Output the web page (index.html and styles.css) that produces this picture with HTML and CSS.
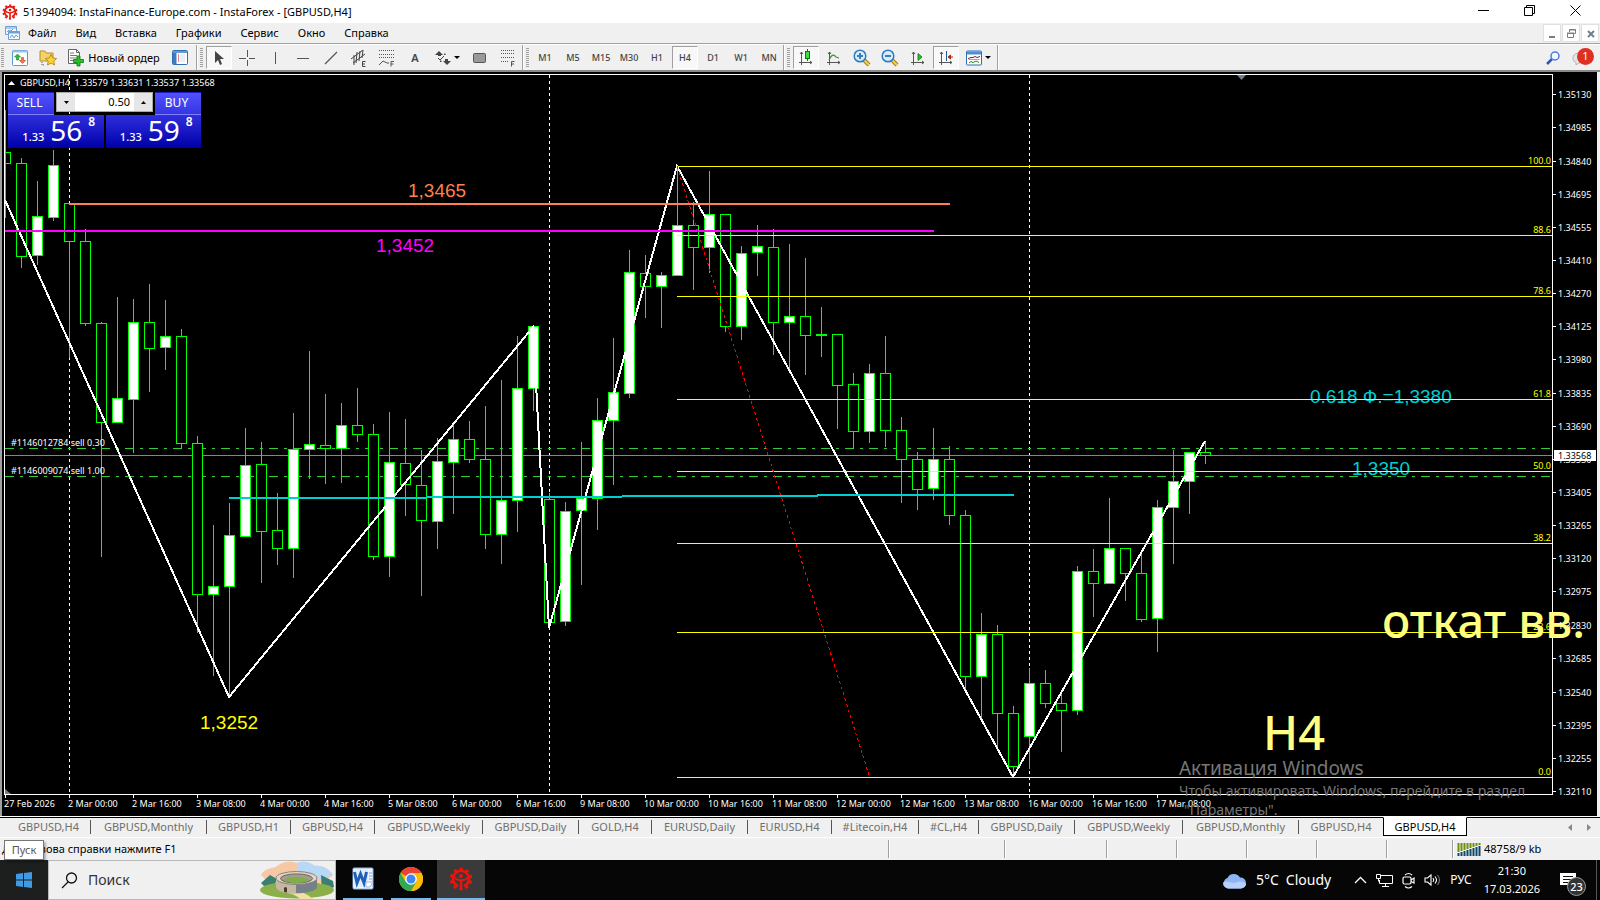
FILE: index.html
```html
<!DOCTYPE html>
<html lang="ru">
<head>
<meta charset="utf-8">
<title>51394094: InstaFinance-Europe.com - InstaForex - [GBPUSD,H4]</title>
<link rel="stylesheet" href="styles.css">
</head>
<body>
<svg class="defs" width="0" height="0" aria-hidden="true">
  <symbol id="insta" viewBox="0 0 24 24">
    <g fill="none" stroke="currentColor">
      <path d="M9 19.200A8 8 0 1 1 15 19.200" stroke-width="2.600"/>
      <circle cx="12" cy="12" r="10" stroke-width="2.600" stroke-dasharray="3.200 3.083" stroke-dashoffset="-1.500"/>
      <path d="M12 13v10" stroke-width="2.400"/>
      <path d="M5 10c2 3 4 3 7 3.500 3-.5 5-.5 7-3.500" stroke-width="2"/>
    </g>
    <circle cx="12" cy="9" r="2" fill="currentColor"/>
  </symbol>
</svg>

<header class="titlebar">
  <svg class="ico16 red" viewBox="0 0 24 24"><use href="#insta"/></svg>
  <h1 class="title">51394094: InstaFinance-Europe.com - InstaForex - [GBPUSD,H4]</h1>
  <div class="winbtns">
    <button aria-label="Свернуть"><svg width="11" height="11"><path d="M0 5.500h11" stroke="#000"/></svg></button>
    <button aria-label="Восстановить"><svg width="11" height="11" fill="none" stroke="#000"><path d="M.5 2.500h8v8h-8zM2.500 2.500v-2h8v8h-2"/></svg></button>
    <button aria-label="Закрыть"><svg width="11" height="11"><path d="M.5.5l10 10M10.500.5l-10 10" stroke="#000"/></svg></button>
  </div>
</header>

<nav class="menubar">
  <svg class="ico16" viewBox="0 0 16 16" fill="#f4f8ff" stroke="#6f9fd8"><path d="M1.500 1.500h11v8h-11z"/><path d="M1.500 3h11M3 7l2-2 2 1 2-2" /><path d="M4.500 6.500h11v8h-11z"/><path d="M4.500 7.500h11" stroke-width="2"/><path d="M6 13l2-3 2 3 2-3 2 2" fill="none"/></svg>
  <button>Файл</button><button>Вид</button><button>Вставка</button><button>Графики</button><button>Сервис</button><button>Окно</button><button>Справка</button>
  <div class="mdi">
    <button aria-label="Свернуть окно"><svg width="15" height="15"><path d="M4 11h6" stroke="#708090" stroke-width="2"/></svg></button>
    <button aria-label="Восстановить окно"><svg width="15" height="15" fill="none" stroke="#708090"><path d="M3.500 7.500h6v4h-6zM3 7h7M5.500 6v-2.500h6v4h-2M5 4h7"/></svg></button>
    <button aria-label="Закрыть окно"><svg width="15" height="15"><path d="M5 5l6 6M11 5l-6 6" stroke="#708090" stroke-width="2"/></svg></button>
  </div>
</nav>

<div class="toolbar">
  <div class="group first">
    <i class="grip"></i>
    <button class="tb" aria-label="Новый график"><svg width="16" height="16"><rect x=".5" y=".5" width="15" height="15" rx="1" fill="#fff" stroke="#5a98d4"/><path d="M1 1.500h14" stroke="#9cc4ea" stroke-width="2"/><path d="M5.500 4l3 3h-2v3h-2V7h-2z" fill="#3dbb3d" stroke="#137d13" stroke-width=".6"/><path d="M10.500 13.500l3-3h-2v-3h-2v3h-2z" fill="#f47a4a" stroke="#c03a10" stroke-width=".6"/></svg></button>
    <button class="tb" aria-label="Профили"><svg width="18" height="17"><path d="M1 2h5l1 2h7v8H1z" fill="#f2d36a" stroke="#b98e2b"/><path d="M3 13v3h3" fill="none" stroke="#555" stroke-dasharray="1 1"/><path d="M12 5.500l1.800 3.500 3.900.5-2.900 2.600.8 3.900-3.600-1.900-3.500 1.900.7-3.900-2.800-2.600 3.900-.5z" fill="#fbd23c" stroke="#b07c14" stroke-width=".8"/></svg></button>
    <button class="tb wide"><svg width="16" height="18"><path d="M.5.5h8l3 3v11H.5z" fill="#fff" stroke="#666"/><path d="M8.500.5v3h3" fill="none" stroke="#666"/><path d="M2 4h4M2 6.500h7M2 9h7M2 11.500h4" stroke="#777"/><path d="M9 7h3v3.500h3.500v3H12V17H9v-3.500H5.500v-3H9z" fill="#22c322" stroke="#0b7a0b" stroke-width=".8"/></svg>Новый ордер</button>
    <button class="tb" aria-label="Обзор рынка"><svg width="16" height="15"><rect x=".5" y=".5" width="15" height="14" rx="1" fill="#fff" stroke="#2f6fb0"/><path d="M1 1h14v2H1z" fill="#5c9bd8"/><path d="M1 3h3.500v11H1z" fill="#3d7cc0"/><path d="M6 5h1M6 7h1M6 9h1M6 11h1" stroke="#c00"/><path d="M8 5h5M8 7h5M8 9h5M8 11h5" stroke="#cfe0f2"/></svg></button>
  </div>
  <div class="group">
    <i class="grip"></i>
    <button class="tb on" aria-label="Курсор"><svg width="16" height="18"><path d="M4 2v12l3-3 2 5 2-1-2-5h4z" fill="#444"/></svg></button>
    <button class="tb" aria-label="Перекрестие"><svg width="16" height="16" stroke="#555"><path d="M0 8.500h7M10 8.500h6M8.500 0v7M8.500 10v6"/></svg></button>
    <button class="tb" aria-label="Вертикальная линия"><svg width="16" height="16" stroke="#555"><path d="M8.500 2v12"/></svg></button>
    <button class="tb" aria-label="Горизонтальная линия"><svg width="16" height="16" stroke="#555"><path d="M2 8.500h12"/></svg></button>
    <button class="tb" aria-label="Трендовая линия"><svg width="16" height="16" stroke="#555" stroke-width="1.200"><path d="M2 14L14 2"/></svg></button>
    <button class="tb" aria-label="Канал"><svg width="18" height="18" stroke="#444" fill="none"><path d="M1 10L13 1M3 14L15 5M4 6l0 10M7 3l-1 11M10 2l-1 10M13 1l-1 8"/><path d="M15.500 12.500h-3v5h3M12.500 15h2.500"/></svg></button>
    <button class="tb" aria-label="Фибоначчи"><svg width="18" height="18" stroke="#555" fill="none"><path d="M1 1.500h16M1 5.500h16M1 8.500h16" stroke-dasharray="1 1"/><path d="M1 16l4-4 4 2h2"/><path d="M16 12.500h-3v5M13 15h2.500"/></svg></button>
    <button class="tb letter">A</button>
    <button class="tb drop" aria-label="Стрелки"><svg width="16" height="16" fill="#444"><path d="M4 1l4 4H0zM12 15l4-4H8z"/><path d="M3 4h3v2H3zM10 9h3v2h-3zM9 3.500h1.500v1.500H9zM5 10.500h1.500V12H5z"/><path d="M3 8l2 2 4-4" stroke="#444" fill="none"/></svg><svg width="6" height="4"><path d="M0 0h6L3 3z"/></svg></button>
    <button class="tb" aria-label="Прямоугольник"><svg width="14" height="16"><rect x=".5" y="3.500" width="12" height="9" rx="1" fill="#999" stroke="#555"/></svg></button>
    <button class="tb" aria-label="Сетка"><svg width="16" height="18" stroke="#555" fill="none"><path d="M1 1.500h14M1 4.500h14M1 8.500h14M1 12.500h8" stroke-dasharray="1 1"/><path d="M14.500 12.500h-3v5M11.500 15h2.500"/></svg></button>
  </div>
  <div class="group">
    <i class="grip"></i>
    <button class="tb tf">M1</button><button class="tb tf">M5</button><button class="tb tf">M15</button><button class="tb tf">M30</button><button class="tb tf">H1</button><button class="tb tf on">H4</button><button class="tb tf">D1</button><button class="tb tf">W1</button><button class="tb tf">MN</button>
  </div>
  <div class="group">
    <i class="grip"></i>
    <button class="tb on" aria-label="Свечи"><svg width="16" height="17"><path d="M3.500 3v13M1 13.500h13M2 5l1.500-2L5 5M12 12l2 1.500L12 15" fill="none" stroke="#555"/><path d="M9.500 0v12" stroke="#067a06"/><rect x="7.500" y="2.500" width="4" height="7" fill="#3be03b" stroke="#067a06"/></svg></button>
    <button class="tb" aria-label="Линия"><svg width="16" height="17"><path d="M3.500 3v13M1 13.500h13M2 5l1.500-2L5 5M12 12l2 1.500L12 15" fill="none" stroke="#555"/><path d="M3 11c3-6 5-6 7-3l3 1" fill="none" stroke="#2f9a2f" stroke-width="1.200"/></svg></button>
    <button class="tb" aria-label="Увеличить"><svg width="18" height="18"><path d="M11 11l5 5" stroke="#a87c10" stroke-width="4"/><path d="M11 11l5 5" stroke="#f5d34a" stroke-width="2"/><circle cx="7" cy="7" r="5.800" fill="#d4ecfb" stroke="#2f7cc4" stroke-width="1.500"/><path d="M7 4v6M4 7h6" stroke="#3a7fae" stroke-width="2"/></svg></button>
    <button class="tb" aria-label="Уменьшить"><svg width="18" height="18"><path d="M11 11l5 5" stroke="#a87c10" stroke-width="4"/><path d="M11 11l5 5" stroke="#f5d34a" stroke-width="2"/><circle cx="7" cy="7" r="5.800" fill="#d4ecfb" stroke="#2f7cc4" stroke-width="1.500"/><path d="M4 7h6" stroke="#3a7fae" stroke-width="2"/></svg></button>
    <button class="tb" aria-label="Автопрокрутка"><svg width="16" height="17"><path d="M3.500 3v13M1 13.500h13M2 5l1.500-2L5 5M12 12l2 1.500L12 15" fill="none" stroke="#555"/><path d="M8 4.500v7l4-3.500z" fill="#2bbb2b" stroke="#0a7a0a" stroke-width=".8"/></svg></button>
    <button class="tb on" aria-label="Сдвиг"><svg width="16" height="17"><path d="M3.500 3v13M1 13.500h13M2 5l1.500-2L5 5M12 12l2 1.500L12 15" fill="none" stroke="#555"/><path d="M8.500 2v10" stroke="#1c5d94"/><path d="M15 8h-4M12.500 6L10 8l2.500 2z" fill="#d33a10" stroke="#a82a08"/></svg></button>
    <button class="tb drop" aria-label="Шаблоны"><svg width="16" height="16"><rect x=".5" y="1" width="15" height="14" rx="1" fill="#fff" stroke="#2f6fb0"/><path d="M1 1.500h14v3H1z" fill="#4a8fd8"/><path d="M2 8.500l3-1 2 0 2-1 2 1 3-1" fill="none" stroke="#8a1c10"/><path d="M2.500 9.500h11" stroke="#2f6fb0" stroke-width=".6"/><path d="M3 13l2-1.500 2 1 3-1.500 3 1.500" fill="none" stroke="#1f8a1f"/></svg><svg width="6" height="4"><path d="M0 0h6L3 3z"/></svg></button>
  </div>
  <div class="group last"></div>
  <button class="tb" aria-label="Поиск"><svg width="16" height="16" fill="none"><path d="M7 9l-5 5" stroke="#2a56c4" stroke-width="2.500"/><circle cx="10" cy="6" r="4" fill="#f3f8ff" stroke="#4a7ae0" stroke-width="1.500"/></svg></button>
  <button class="tb chat" aria-label="Сообщения"><svg width="16" height="14"><path d="M2 8a6 5 0 1 1 6 4l-3 2v-2.500a5 5 0 0 1-3-3.500z" fill="#e4e6ec" stroke="#b4b4b8"/></svg><span class="badge">1</span></button>
</div>

<main class="chart">
  <svg id="plot" class="plot" viewBox="0 72 1600 744" role="img" aria-label="GBPUSD,H4"></svg>
  <section class="trade">
    <button class="side sell">SELL</button>
    <div class="volume">
      <button aria-label="Меньше"><svg width="5" height="3"><path d="M0 0h5L2.500 3z"/></svg></button>
      <input aria-label="Объём" value="0.50">
      <button aria-label="Больше"><svg width="5" height="3"><path d="M0 3h5L2.500 0z"/></svg></button>
    </div>
    <button class="side buy">BUY</button>
    <div class="quote bid"><small>1.33</small><b>56</b><sup>8</sup></div>
    <div class="quote ask"><small>1.33</small><b>59</b><sup>8</sup></div>
  </section>
</main>

<nav class="tabs">
  <button class="h">GBPUSD,H4</button><button class="m">GBPUSD,Monthly</button><button class="h">GBPUSD,H1</button><button class="h">GBPUSD,H4</button><button class="w">GBPUSD,Weekly</button><button class="d">GBPUSD,Daily</button><button class="gold">GOLD,H4</button><button class="d">EURUSD,Daily</button><button class="h">EURUSD,H4</button><button class="lite">#Litecoin,H4</button><button class="oil">#CL,H4</button><button class="d">GBPUSD,Daily</button><button class="w">GBPUSD,Weekly</button><button class="m">GBPUSD,Monthly</button><button class="h">GBPUSD,H4</button><button class="h active">GBPUSD,H4</button>
  <div class="scroll">
    <button aria-label="Влево"><svg width="4" height="7"><path d="M4 0v7L0 3.500z" fill="#888"/></svg></button>
    <button aria-label="Вправо"><svg width="4" height="7"><path d="M0 0v7l4-3.500z" fill="#888"/></svg></button>
  </div>
</nav>

<footer class="status">
  <p class="help">Для вызова справки нажмите F1</p>
  <i class="cell c1"></i><i class="cell c2"></i><i class="cell c3"></i><i class="cell c3"></i><i class="cell c3"></i><i class="cell c3"></i><i class="cell c4"></i>
  <p class="cell net"><svg width="24" height="13"><path d="M1.500 0v9M4.500 0v8M7.500 0v7M10.500 0v6M13.500 0v5M16.500 0v4M19.500 0v3M22.500 0v2" stroke="#6f8f0a" stroke-width="2"/><path d="M1.500 13v-3M4.500 13V9M7.500 13V8M10.500 13V7M13.500 13V6M16.500 13V5M19.500 13V4M22.500 13V3" stroke="#0f4868" stroke-width="2"/></svg>48758/9 kb</p>
  <div class="tip">Пуск</div>
</footer>

<div class="taskbar">
  <button class="start" aria-label="Пуск"><svg width="16" height="16" fill="#409ae1"><path d="M0 2l7-1v6.500H0zM8 1l8-1v7.500H8zM0 8.500h7V15l-7-1zM8 8.500h8V16l-8-1z"/></svg></button>
  <label class="search">
    <svg width="17" height="17" fill="none" stroke="#111" stroke-width="1.300"><circle cx="10.500" cy="6" r="5"/><path d="M7 10L1 16"/></svg>
    <input type="text" placeholder="Поиск">
    <svg class="stadium" viewBox="0 0 76 38">
      <path d="M2 14C6 6 14 8 18 5c6-5 14-5 20-3 8-3 14 0 18 3 8-1 14 3 18 9l-10 8H10z" fill="#f6c9a4"/>
      <path d="M38 2c8-3 14 0 18 3 8-1 14 3 18 9l-12 4-24-6z" fill="#b9d8f6"/>
      <path d="M2 22l9-8 7 4-6 14zM62 14l12 6 1 6-12 6z" fill="#3b7f72"/>
      <ellipse cx="38" cy="29" rx="37" ry="8.500" fill="#8bb04a"/>
      <path d="M20 31c10 0 14 2 22 7h12c-6-5-12-8-20-10z" fill="#f3dfa6"/>
      <path d="M17 17v10c4 7 36 7 41 0V17z" fill="#75808a"/>
      <path d="M17 17v10c3 4 12 6 20 5V17z" fill="#c5b8a2"/>
      <ellipse cx="37.500" cy="17" rx="20.500" ry="6.500" fill="#ded6c6" stroke="#8a8274"/>
      <ellipse cx="37.500" cy="17.500" rx="16" ry="4.600" fill="#a49c8c" stroke="#6d675e"/>
      <ellipse cx="37.500" cy="19" rx="12" ry="3" fill="#7fae4a"/>
      <path d="M25 31v-4q1.500-2 3 0v4.500z" fill="#4e3a2c"/>
    </svg>
  </label>
  <button class="app run" aria-label="Word"><svg width="24" height="24"><rect x="2" y="1" width="20" height="21" rx="1" fill="#eef4fc" stroke="#8fb2dd"/><path d="M2 2h15v18H2z" fill="#e3edfa"/><path d="M3.500 5l2.500 11 3.500-9 3.500 9L15.500 5" fill="none" stroke="#1f5fb8" stroke-width="3"/><path d="M18 6h3M18 9h3M18 12h3" stroke="#7aa3d8"/><path d="M15 15h7l-3 5h-4z" fill="#fff" stroke="#9ab8de"/></svg></button>
  <button class="app run" aria-label="Chrome"><svg width="24" height="24" viewBox="0 0 24 24"><circle cx="12" cy="12" r="12" fill="#fbbc05"/><path d="M12 12L1.600 6A12 12 0 0 1 22.400 6z" fill="#ea4335"/><path d="M12 6h10.400A12 12 0 0 1 12 24l5.200-9z" fill="#fbbc05"/><path d="M1.600 6A12 12 0 0 0 12 24l5.200-9L12 12 6.800 15z" fill="#34a853"/><circle cx="12" cy="12" r="5.800" fill="#fff"/><circle cx="12" cy="12" r="4.500" fill="#4285f4"/></svg></button>
  <button class="app run current" aria-label="InstaForex"><svg class="red" width="24" height="24"><use href="#insta"/></svg></button>
  <div class="tray">
    <svg width="25" height="17"><path d="M6 16.500a5.500 5.500 0 0 1-.5-10.500A7 7 0 0 1 18 5.500a5.500 5.500 0 0 1 1 11z" fill="#8db4f4"/><path d="M6 16.500a5.500 5.500 0 0 1-5-6c5-3 9 2 13 0s7-1 10 1a5 5 0 0 1-5 5z" fill="#b8d0fa"/></svg>
    <span class="weather">5°C&ensp;Cloudy</span>
    <svg class="chev" width="13" height="8" fill="none" stroke="#fff" stroke-width="1.300"><path d="M1 7l5.500-5.500L12 7"/></svg>
    <svg width="17" height="15" fill="none" stroke="#fff"><path d="M5 2.500h11.500v8H3.500V7M9.500 10.500v3M6 13.500h7M.5 1.500h4v4h-4zM2.500 5.500v3"/></svg>
    <svg width="13" height="17" fill="none" stroke="#fff" stroke-width="1.200"><rect x="1" y="5" width="8" height="7" rx="1.500"/><path d="M9 8l3-2v5L9 9.500M3 3q3.500-3 7 0M3 14.500q3.500 3 7 0"/></svg>
    <svg width="17" height="14" fill="none" stroke="#fff" stroke-width="1.100"><path d="M1 5h2.500L7 2v10L3.500 9H1zM9 5q1.500 2 0 4M11 3.500q3 3.500 0 7"/><path d="M13.500 2q4 5 0 10" stroke="#777"/></svg>
    <span class="lang">РУС</span>
    <div class="clock"><time>21:30</time><time>17.03.2026</time></div>
    <button class="notes" aria-label="Уведомления"><svg width="16" height="17"><path d="M0 1h16v12h-4v4l-4-4H0z" fill="#fff"/><path d="M3 4.500h10M3 7.500h10M3 10.500h6" stroke="#111"/></svg><span>23</span></button>
  </div>
</div>
<script src="chart.js"></script>
</body>
</html>
```

FILE: styles.css
```css
* { box-sizing: border-box; }
body {
  margin: 0;
  min-height: 100vh;
  display: flex;
  flex-direction: column;
  background: #f0f0f0;
  color: #000;
  font: 11px/16px "Noto Sans", "Open Sans", sans-serif;
}
button, input { font: inherit; color: inherit; border: 0; background: none; padding: 0; margin: 0; }
p, h1 { margin: 0; }
svg { display: block; flex: none; }
.defs { position: absolute; }
.ico16 { width: 16px; height: 16px; }
.red { color: #e8150c; }

.titlebar { display: flex; align-items: center; height: 23px; padding-left: 2px; gap: 5px; background: #fff; }
.title { font-size: 11px; font-weight: 400; flex: 1; white-space: nowrap; }
.winbtns { display: flex; height: 20px; align-self: flex-start; padding-right: 2px; }
.winbtns button { width: 46px; display: grid; place-items: center; }

.menubar { display: flex; align-items: center; height: 21px; padding-left: 4px; border-bottom: 1px solid #a0a0a0; }
.menubar > button { margin-left: 19px; }
.menubar > svg + button { margin-left: 8px; }
.mdi { margin-left: auto; display: flex; gap: 1px; padding-right: 1px; }
.mdi button { width: 18px; height: 18px; background: #fff; border: 1px solid #e0e0e0; display: grid; place-items: center; }

.toolbar { display: flex; height: 28px; border-top: 1px solid #fff; border-bottom: 2px solid #8a8a8a; align-items: center; }
.group { display: flex; align-items: center; height: 25px; gap: 2px; border-left: 1px solid #a0a0a0; box-shadow: inset 1px 0 #fff; padding: 0 1px 0 3px; }
.group.first { border-left: 0; padding-left: 1px; padding-right: 3px; box-shadow: none; }
.group.last { flex: 1; }
.grip { width: 3px; height: 20px; margin-right: 1px; background: repeating-linear-gradient(#a0a0a0 0 1px, #f0f0f0 1px 2px); }
.tb { width: 26px; height: 23px; display: flex; align-items: center; justify-content: center; color: #444; }
.tb.on { background: #f8f8f8; border: 1px solid #fff; border-top-color: #a0a0a0; border-left-color: #a0a0a0; }
.tb.wide { width: 102px; gap: 4px; color: #000; white-space: nowrap; }
.tb.drop { width: 35px; gap: 3px; justify-content: flex-start; padding-left: 5px; }
.tb.letter { font-weight: 600; }
.tb.tf { font-size: 9px; font-weight: 500; }
.tb.chat { position: relative; margin-right: 8px; }
.badge { position: absolute; left: 11px; top: 2px; width: 17px; height: 17px; border-radius: 50%; background: #dd3020; color: #fff; text-align: center; }

.chart { position: relative; flex: 1; background: #000; }
.plot { width: 100%; height: auto; }
.plot text { font: 9px "Noto Sans", sans-serif; fill: #fff; white-space: pre; }
.plot .fib { fill: #ff0; text-anchor: end; }
.plot .dark { fill: #000; }
.plot .note { font: 19px "Liberation Sans", Arial, sans-serif; }
.plot .big { font-size: 47px; font-weight: 500; fill: #ffff80; }
.plot .mark { font-size: 19px; fill: #777; }
.plot .mark.small { font-size: 14px; }
.plot .orange { fill: #ff7f50; }
.plot .magenta { fill: #f0f; }
.plot .cyan { fill: #00ced1; }
.plot .yellow { fill: #ff0; }

.trade { position: absolute; left: 8px; top: 20px; width: 193px; display: grid; grid-template: 23px 33px / 46px 1fr 1fr 46px; column-gap: 2px; color: #fff; }
.side { font-size: 12px; padding-right: 3px; background: linear-gradient(#5252ff, #3535e4); box-shadow: inset 0 1px #1c1cc0; border-bottom: 1px solid #8080ff; }
.volume { grid-column: 2 / 4; display: flex; height: 20px; border: 1px solid #a8a8a8; background: #fff; color: #000; }
.volume button { width: 18px; background: #e6e6e6; display: grid; place-items: center; }
.volume input { flex: 1; min-width: 0; text-align: right; padding-right: 4px; }
.quote { display: flex; align-items: flex-end; justify-content: center; gap: 6px; padding: 0 8px 4px 14px; background: linear-gradient(#2e2edc, #0000aa); }
.bid { grid-column: 1 / 3; }
.ask { grid-column: 3 / 5; }
.quote small { font-size: 11px; line-height: 14px; font-weight: 500; }
.quote b { font-size: 28px; line-height: 28px; font-weight: 400; }
.quote sup { font-size: 12px; line-height: 14px; font-weight: 600; align-self: flex-start; }

.tabs { display: flex; height: 22px; border-top: 1px solid #fff; border-bottom: 1px solid #fff; padding-left: 7px; color: #6e6e6e; box-shadow: inset 0 1px #000; align-items: center; }
.tabs > button { height: 14px; line-height: 14px; border-right: 1px solid #555; white-space: nowrap; }
.tabs > button:nth-last-of-type(2) { border-right: 0; }
.h { width: 84px; }
.m { width: 116px; }
.w { width: 108px; }
.d { width: 96px; }
.gold { width: 73px; }
.lite { width: 87px; }
.oil { width: 60px; }
.tabs > .active { height: 19px; align-self: flex-start; line-height: 18px; color: #000; background: #fff; border: 1px solid #000; border-top-color: #fff; }
.scroll { margin-left: auto; display: flex; gap: 15px; padding-right: 9px; }

.status { position: relative; display: flex; height: 22px; align-items: center; padding-left: 2px; }
.help { flex: 1; }
.cell { height: 18px; border-left: 1px solid #a0a0a0; box-shadow: inset 1px 0 #fff; }
.c1 { width: 116px; }
.c2 { width: 102px; }
.c3 { width: 70px; }
.c4 { width: 66px; }
.net { width: 148px; display: flex; align-items: center; gap: 3px; padding-left: 4px; }
.tip { position: absolute; left: 4px; top: 2px; width: 40px; height: 20px; border: 1px solid #767676; background: #fff; color: #575757; text-align: center; line-height: 18px; box-shadow: 2px 2px 2px #0004; }

.taskbar { display: flex; height: 40px; background: #060606; color: #fff; }
.start { width: 48px; display: grid; place-items: center; background: #1d1e1e; }
.search { width: 288px; display: flex; align-items: center; gap: 10px; padding-left: 12px; background: #f0f0f0; border: 1px solid #b8b8b8; color: #222; font-size: 14px; }
.search input { flex: 1; min-width: 0; outline: 0; }
.search input::placeholder { color: #333; opacity: 1; }
.stadium { width: 76px; height: 38px; }
.app { width: 48px; height: 40px; display: grid; place-items: center; padding-bottom: 2px; background: linear-gradient(#76b9ed, #76b9ed) bottom / 40px 2px no-repeat; }
.search + .app { margin-left: 3px; }
.current { background-color: #3a3a3a; background-size: 48px 2px; margin-left: 2px; }
.tray { margin-left: auto; display: flex; align-items: center; gap: 9px; padding-right: 3px; }
.weather { font-size: 14px; white-space: pre; margin-right: 14px; }
.lang { font-size: 12px; }
.clock { display: flex; flex-direction: column; align-items: center; gap: 2px; margin-left: 3px; }
.notes { position: relative; width: 48px; height: 40px; display: grid; place-items: center; padding-right: 10px; border-right: 1px solid #555; }
.notes span { position: absolute; left: 18px; top: 17px; width: 19px; height: 19px; border: 1px solid #999; border-radius: 50%; background: #333; line-height: 17px; text-align: center; font-weight: 500; }
```

FILE: chart.js
```javascript
const svg = document.getElementById('plot');
const NS = 'http://www.w3.org/2000/svg';
function add(tag, attrs, text) {
  const el = document.createElementNS(NS, tag);
  for (const k in attrs) el.setAttribute(k, attrs[k]);
  if (text) el.textContent = text;
  svg.appendChild(el);
}
function path(d, stroke, width, dash) {
  add('path', { d, stroke, fill: 'none', 'stroke-width': width || 1, 'stroke-dasharray': dash || 'none', 'shape-rendering': 'crispEdges' });
}
function label(x, y, text, cls) { add('text', { x, y, class: cls || '' }, text); }

// high, body top, body bottom, low, rising
const candles = [
  [110,152,163,217,0],[158,163,256,267,0],[181,216,255,264,1],[150,165,217,220,1],[203,203,241,357,0],
  [229,241,323,325,0],[322,323,422,556,0],[297,398,422,422,1],[299,322,399,452,1],[284,322,348,391,0],
  [300,336,347,369,1],[329,336,443,448,0],[436,443,594,632,0],[525,586,594,675,1],[503,535,586,696,1],
  [428,465,536,536,1],[442,464,531,582,0],[493,530,548,564,0],[413,449,548,577,1],[351,444,449,478,1],
  [394,445,448,483,0],[403,425,448,482,1],[388,425,434,441,0],[424,434,556,559,0],[412,462,556,576,1],
  [419,463,484,515,0],[450,485,520,595,0],[438,461,521,548,1],[423,439,462,513,1],[421,439,459,462,0],
  [406,459,534,548,0],[380,500,534,563,1],[336,388,500,531,1],[326,326,388,410,1],[493,499,622,622,0],
  [502,511,621,625,1],[442,498,510,584,1],[398,420,498,529,1],[338,392,420,484,1],[250,272,393,397,1],
  [255,273,286,317,0],[272,275,286,327,1],[166,225,275,275,1],[202,225,247,289,0],[171,214,247,272,1],
  [214,214,326,331,0],[246,253,326,339,1],[225,246,252,275,1],[229,247,322,354,0],[244,316,322,368,1],
  [258,316,335,374,0],[307,334,335,356,0],[334,334,385,428,0],[373,384,431,448,0],[364,373,431,442,1],
  [336,373,430,446,0],[417,430,459,502,0],[452,459,489,509,0],[428,459,488,499,1],[446,459,515,524,0],
  [510,515,676,691,0],[613,634,676,718,1],[625,634,713,748,0],[706,713,766,775,0],[668,683,736,768,1],
  [670,683,703,707,0],[690,703,710,751,0],[566,571,710,714,1],[549,571,583,616,0],[498,548,583,583,1],
  [548,548,573,600,0],[554,573,619,621,0],[500,507,618,651,1],[450,481,507,563,1],[452,452,481,513,1],
  [442,452,455,463,0]
];

path('M1 72V816', '#a0a0a0', 2);
path('M1598.500 72V816', '#f0f0f0', 3);

[69, 549, 1029].forEach(x => path(`M${x}.5 75V794`, '#fff', 1, '3 3'));
[448, 476].forEach(y => path(`M5 ${y}.5H1552`, '#32cd32', 1, '9 6 3 6'));
path('M5 455.500H1553', '#778899');

candles.forEach((c, i) => {
  const x = 5 + i * 16;
  path(`M${x}.5 ${c[0]}V${c[3] + 1}`, '#0f0');
  const left = Math.max(x - 4.500, 5.500);
  add('rect', { x: left, y: c[1] + .5, width: x + 5.500 - left, height: c[2] - c[1], fill: c[4] ? '#fff' : '#000', stroke: '#0f0', 'shape-rendering': 'crispEdges' });
});

label(408, 197, '1,3465', 'note orange');
label(376, 252, '1,3452', 'note magenta');
label(200, 729, '1,3252', 'note yellow');
label(1310, 403, '0.618 Ф.=1,3380', 'note cyan');
label(1352, 475, '1,3350', 'note cyan');

path('M5 200L229 697 533 327 549 628 677 166 1013 777 1205 441', '#fff', 2);
path('M69 204H950', '#ff7f50', 2);
path('M5 231H934', '#f0f', 2);
path('M229 498H426M426 497H622M622 496H818M817 495H1014', '#00ced1', 2);
[[166,'100.0'],[235,'88.6'],[296,'78.6'],[399,'61.8'],[471,'50.0'],[543,'38.2'],[632,'23.6'],[777,'0.0']].forEach(([y, t]) => {
  path(`M677 ${y}.5H1552`, '#ff0');
  label(1551, y - 2, t, 'fib');
});
path('M677 166L869 775', '#f00', 1, '3 3');

path('M4.500 794V74.500H1552.500V794.500H4', '#fff');
add('path', { d: 'M1237 75h9l-4.500 5z', fill: '#708090' });
add('path', { d: 'M5 789v5h6z', fill: '#708090' });
add('path', { d: 'M8 85h7l-3.500-4z', fill: '#fff' });
label(20, 86, 'GBPUSD,H4  1.33579 1.33631 1.33537 1.33568');
label(11, 446, '#1146012784 sell 0.30');
label(11, 474, '#1146009074 sell 1.00');

const ticks = [94,127,161,194,227,260,293,326,359,393,426,459,492,525,558,591,625,658,692,725,758,791];
const prices = ['1.35130','1.34985','1.34840','1.34695','1.34555','1.34410','1.34270','1.34125','1.33980','1.33835','1.33690','1.33550','1.33405','1.33265','1.33120','1.32975','1.32830','1.32685','1.32540','1.32395','1.32255','1.32110'];
ticks.forEach((y, i) => { path(`M1553 ${y}.5h3`, '#fff'); label(1558, y + 4, prices[i]); });
add('rect', { x: 1554, y: 450, width: 42, height: 11, fill: '#fff' });
label(1558, 459, '1.33568', 'dark');

['27 Feb 2026','2 Mar 00:00','2 Mar 16:00','3 Mar 08:00','4 Mar 00:00','4 Mar 16:00','5 Mar 08:00','6 Mar 00:00','6 Mar 16:00','9 Mar 08:00','10 Mar 00:00','10 Mar 16:00','11 Mar 08:00','12 Mar 00:00','12 Mar 16:00','13 Mar 08:00','16 Mar 00:00','16 Mar 16:00','17 Mar 08:00'].forEach((t, i) => {
  const x = 5 + i * 64;
  path(`M${x}.5 795v3`, '#fff');
  label(x - 1, 807, t);
});

label(1382, 638, 'откат вв.', 'big');
label(1263, 750, 'H4', 'big');
label(1179, 775, 'Активация Windows', 'mark');
label(1179, 796, 'Чтобы активировать Windows, перейдите в раздел', 'mark small');
label(1184, 815, '"Параметры".', 'mark small');
```
